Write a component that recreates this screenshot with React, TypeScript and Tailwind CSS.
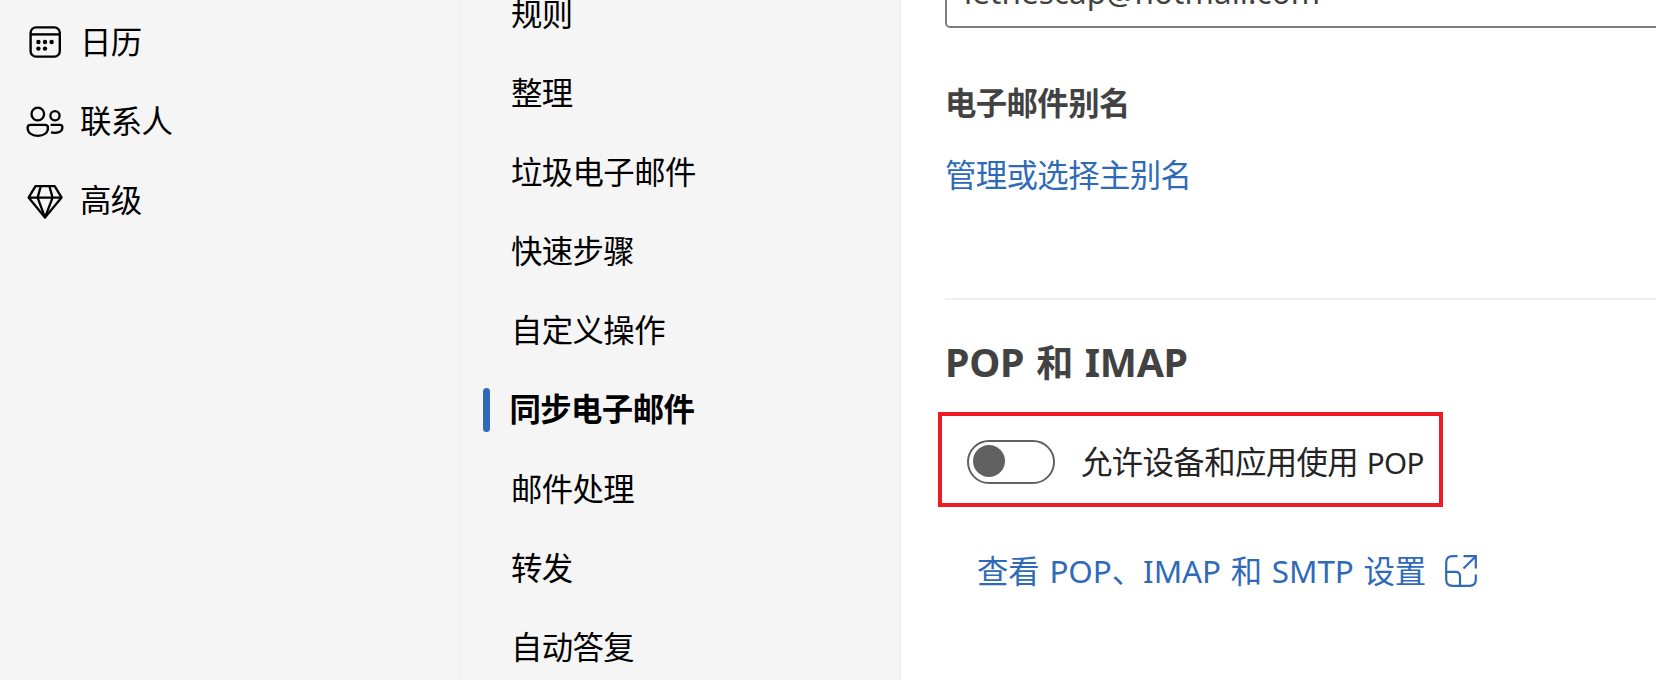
import type { ReactNode } from "react";

const navItems: { label: string; icon: ReactNode }[] = [
  {
    label: "日历",
    icon: (
      <svg viewBox="0 0 40 40" className="h-10 w-10" fill="none" stroke="currentColor" strokeWidth="2.4">
        <rect x="5.6" y="5.4" width="29.2" height="29.2" rx="5.4" />
        <path d="M5.6 12.4H34.8" />
        <g fill="currentColor" stroke="none">
          <circle cx="13.4" cy="20" r="2.2" />
          <circle cx="20" cy="20" r="2.2" />
          <circle cx="26.6" cy="20" r="2.2" />
          <circle cx="13.4" cy="26.6" r="2.2" />
          <circle cx="20" cy="26.6" r="2.2" />
        </g>
      </svg>
    ),
  },
  {
    label: "联系人",
    icon: (
      <svg viewBox="0 0 40 40" className="h-10 w-10" fill="none" stroke="currentColor" strokeWidth="2.3">
        <circle cx="12.8" cy="13" r="6.3" />
        <circle cx="30" cy="14.8" r="4.6" />
        <path d="M5.6 23.8H20Q23 23.8 23 26.8C23 31.8 19 34.8 12.8 34.8S2.6 31.8 2.6 26.8Q2.6 23.8 5.6 23.8Z" />
        <path d="M25.6 23.8H35Q37.4 23.8 37.4 26.4C37.4 30.4 33 32.8 26 31.4" />
      </svg>
    ),
  },
  {
    label: "高级",
    icon: (
      <svg viewBox="0 0 40 40" className="h-10 w-10" fill="none" stroke="currentColor" strokeWidth="2.3" strokeLinejoin="round">
        <path d="M10.5 6.2H29.7L36.6 17.6L20 37.4L3.6 17.6Z" />
        <path d="M3.6 17.6H36.6M15.8 6.2L12.6 17.6L20 37.4L27.6 17.6L24.4 6.2" />
      </svg>
    ),
  },
];

const sections = ["规则", "整理", "垃圾电子邮件", "快速步骤", "自定义操作", "同步电子邮件", "邮件处理", "转发", "自动答复"];

export default function App() {
  return (
    <div className="flex h-[680px] w-full overflow-hidden bg-white font-['Noto_Sans','Noto_Sans_CJK_SC',sans-serif] text-[31.4px] leading-[44px] tracking-[-0.6px] whitespace-nowrap text-black">
      <nav className="w-[461px] shrink-0 border-r-2 border-[#f0f0f0] bg-[#f5f5f5] pt-[2px] pl-[25px]">
        {navItems.map((item) => (
          <div key={item.label} className="flex h-[79.2px] items-center gap-[15px]">
            {item.icon}
            <span>{item.label}</span>
          </div>
        ))}
      </nav>
      <nav className="w-[440px] shrink-0 border-r-2 border-[#f0f0f0] bg-[#f5f5f5] pl-[22px]">
        <div className="-mt-[26px]">
          {sections.map((s) =>
            s === "同步电子邮件" ? (
              <div key={s} className="flex h-[79.2px] items-center gap-[19.5px] font-bold">
                <span className="h-11 w-[7px] rounded-full bg-[#2f6ab9]" />
                <span className="-mt-px">{s}</span>
              </div>
            ) : (
              <div key={s} className="flex h-[79.2px] items-center pl-[28px]">
                {s}
              </div>
            ),
          )}
        </div>
      </nav>
      <main className="min-w-0 flex-1 pl-[44px]">
        <div className="-mt-[43px] flex h-[71px] w-[900px] items-center rounded-[5px] border-2 border-[#7d7d7d] pb-px pl-[17px] text-[#424242]">
          <span className="tracking-[0.1px]">lethescap@hotmail.com</span>
        </div>
        <h3 className="mt-[53px] font-bold text-[#424242]">电子邮件别名</h3>
        <a className="mt-[28px] block text-[#2f6ab9]">管理或选择主别名</a>
        <div className="mt-[101px] h-[2px] bg-[#f0f0f0]" />
        <h2 className="mt-[36px] text-[39.4px] leading-[52px] font-bold tracking-[-0.3px] text-[#424242] [word-spacing:2px]">
          POP <span className="text-[37px]">和</span> IMAP
        </h2>
        <div className="mt-[23px] -ml-[7px] flex h-[95px] w-[505px] items-center border-4 border-[#ed1c24] pt-[4px] pl-[25px]">
          <span className="flex h-11 w-22 shrink-0 items-center rounded-full border-2 border-[#616161] pb-[1px] pl-[4px]">
            <span className="h-8 w-8 rounded-full bg-[#616161]" />
          </span>
          <span className="ml-[26px] pt-[2px] text-[#242424] [word-spacing:1px]">
            允许设备和应用使用 <span className="text-[29.6px]">POP</span>
          </span>
        </div>
        <a className="mt-[42px] ml-[32px] flex items-center text-[#2f6ab9]">
          <span className="tracking-[-0.05px] [word-spacing:1.6px]">查看 POP、IMAP 和 SMTP 设置</span>
          <svg viewBox="0 0 32 32" className="ml-[19px] h-8 w-8" fill="none" stroke="currentColor" strokeWidth="2.2">
            <path d="M12.5 1.2H7.5Q1.2 1.2 1.2 7.5V24.5Q1.2 30.8 7.5 30.8H24.5Q30.8 30.8 30.8 24.5V19.5" />
            <path d="M1.2 16.8H10.5Q15 16.8 15 21.3V30.8" />
            <path d="M18.5 1.2H30.8V13.5M30.8 1.2L18.5 13.5" />
          </svg>
        </a>
      </main>
    </div>
  );
}
